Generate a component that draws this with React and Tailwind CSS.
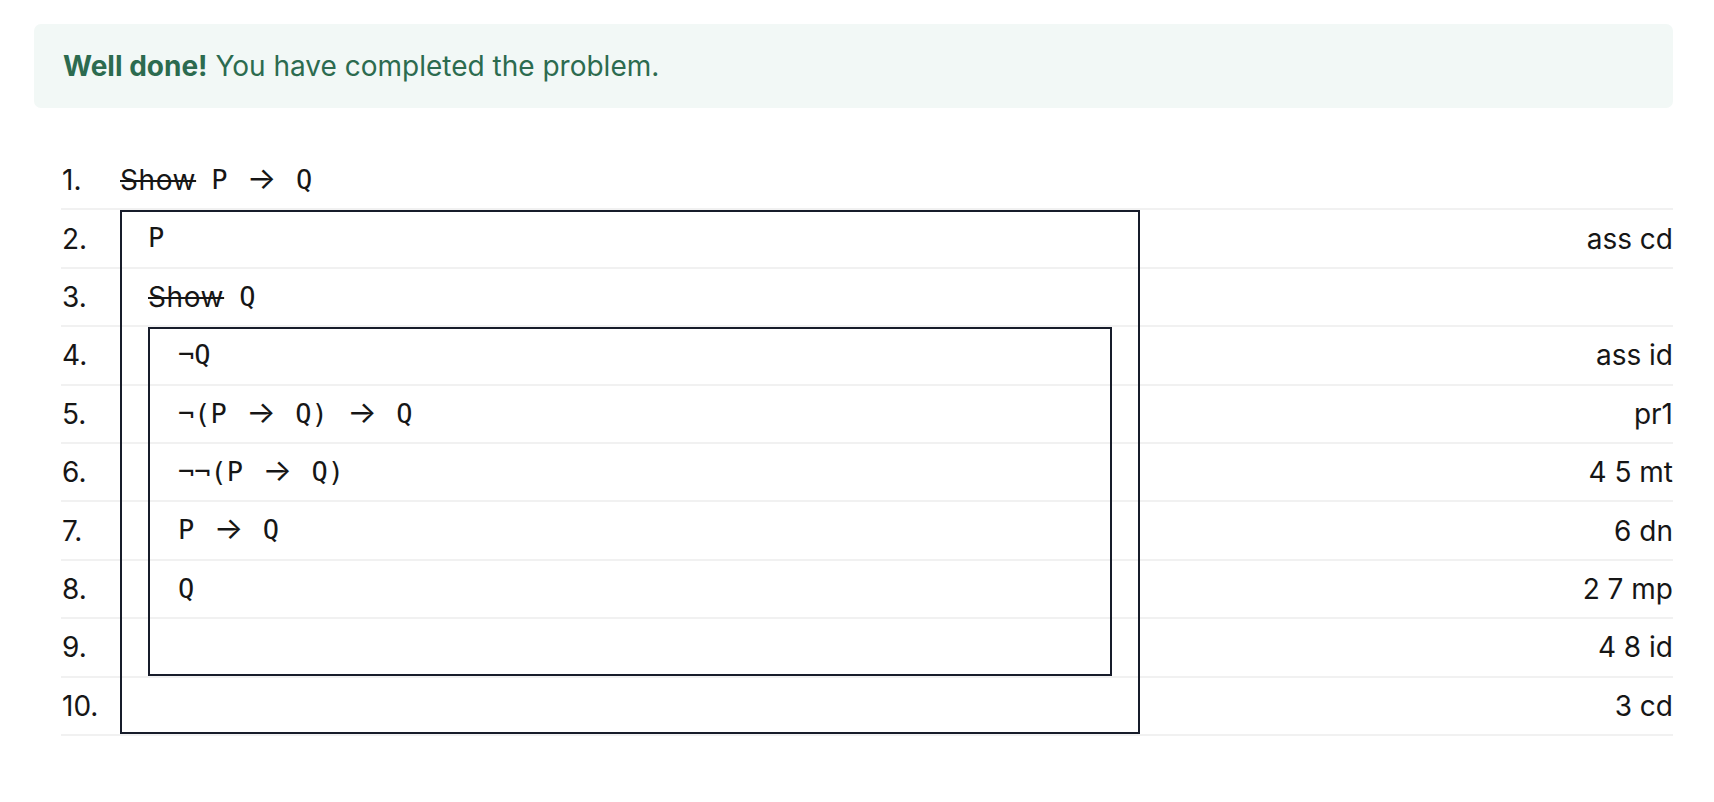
import React from "react";

const ROW_H = 58.4;

const rows = [
  { n: "1.", depth: 0, show: true, f: "P → Q", j: "" },
  { n: "2.", depth: 1, f: "P", j: "ass cd" },
  { n: "3.", depth: 1, show: true, f: "Q", j: "" },
  { n: "4.", depth: 2, f: "¬Q", j: "ass id" },
  { n: "5.", depth: 2, f: "¬(P → Q) → Q", j: "pr1" },
  { n: "6.", depth: 2, f: "¬¬(P → Q)", j: "4 5 mt" },
  { n: "7.", depth: 2, f: "P → Q", j: "6 dn" },
  { n: "8.", depth: 2, f: "Q", j: "2 7 mp" },
  { n: "9.", depth: 2, f: "", j: "4 8 id" },
  { n: "10.", depth: 1, f: "", j: "3 cd" },
];

// subproof boxes, by row index (0 based)
const boxes = [
  { from: 1, to: 9, inset: 0 },
  { from: 3, to: 8, inset: 28 },
];

const Formula = ({ text }) => {
  if (!text) return null;
  const parts = text.split(" → ");
  return (
    <span className="font-['DejaVu_Sans_Mono',monospace] text-[27px] whitespace-pre">
      {parts.map((p, i) => (
        <React.Fragment key={i}>
          {i > 0 && (
            <>
              {" "}
              <span className="inline-block w-[36px] text-center font-['Inter',sans-serif] text-[31px] leading-none">→</span>
              {" "}
            </>
          )}
          {p}
        </React.Fragment>
      ))}
    </span>
  );
};

const indent = ["pl-0", "pl-[28px]", "pl-[58px]"];

export default function App() {
  return (
    <div className="min-h-screen bg-white pl-[34px] pr-[41px] pt-[24px] font-['Inter',sans-serif] text-[#161616]">
      {/* alert */}
      <div className="rounded-[7px] bg-[#f2f8f6] px-[29px] py-[28px] text-[28px] leading-[28px] text-[#2c6b4f]">
        <strong className="font-bold">Well done!</strong> You have completed the problem.
      </div>

      {/* proof */}
      <div className="relative ml-[27px] mt-[44px]">
        {rows.map((r) => (
          <div
            key={r.n}
            className="grid h-[58.4px] grid-cols-[59px_1020px_1fr] items-center border-b-2 border-[#f1f1f1] text-[28px]"
          >
            <div className="pl-px">{r.n}</div>
            <div className={`flex items-center ${indent[r.depth]}`}>
              {r.show && <span className="mr-[15px] tracking-[0.6px] line-through">Show</span>}
              <Formula text={r.f} />
            </div>
            <div className="text-right">{r.j}</div>
          </div>
        ))}

        {boxes.map((b, i) => (
          <div
            key={i}
            className="pointer-events-none absolute border-2 border-[#171c2a]"
            style={{
              top: b.from * ROW_H,
              height: (b.to - b.from + 1) * ROW_H - 1.5,
              left: 59 + b.inset,
              width: 1020 - b.inset * 2,
            }}
          />
        ))}
      </div>
    </div>
  );
}
